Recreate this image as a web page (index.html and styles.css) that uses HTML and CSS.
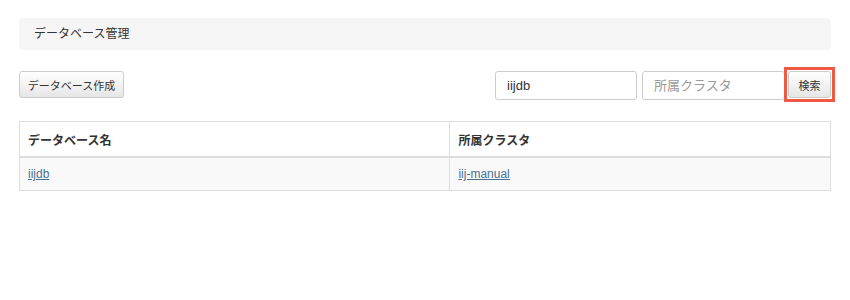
FILE: index.html
```html
<!doctype html>
<html lang="ja">
    <head>
        <meta charset="UTF-8" />
        <meta name="viewport" content="width=device-width, initial-scale=1.0" />
        <title>データベース管理</title>
        <link rel="stylesheet" href="styles.css">
    </head>
    <body>
        <div class="page">
            <div class="breadcrumb">データベース管理</div>

            <div class="toolbar">
                <button type="button" class="btn btn-create">データベース作成</button>
                <form class="search-form">
                    <input type="text" class="form-input" value="iijdb" />
                    <input type="text" class="form-input" placeholder="所属クラスタ" />
                    <span class="highlight">
                        <button type="submit" class="btn btn-search">検索</button>
                    </span>
                </form>
            </div>

            <table class="db-table">
                <thead>
                    <tr>
                        <th>データベース名</th>
                        <th>所属クラスタ</th>
                    </tr>
                </thead>
                <tbody>
                    <tr>
                        <td><a href="#">iijdb</a></td>
                        <td><a href="#">iij-manual</a></td>
                    </tr>
                </tbody>
            </table>
        </div>
    </body>
</html>
```

FILE: styles.css
```css
/* General Styles */
body {
    font-family: "Liberation Sans", "Noto Sans CJK JP", sans-serif;
    font-size: 12px;
    color: #333;
    margin: 0;
    padding: 0;
    background-color: #fff;
}

.page {
    padding: 18px 19px;
}

/* Breadcrumb */
.breadcrumb {
    background-color: #f5f5f5;
    border-radius: 4px;
    height: 32px;
    line-height: 32px;
    padding-left: 15px;
}

/* Toolbar */
.toolbar {
    display: flex;
    justify-content: space-between;
    align-items: flex-start;
    height: 29px;
    margin-top: 21px;
}

.btn {
    font-family: inherit;
    font-size: 11px;
    color: #333;
    height: 27px;
    padding: 0 9px;
    border: 1px solid #ccc;
    border-radius: 3px;
    background: linear-gradient(#fff, #e6e6e6);
    cursor: pointer;
}

.btn-create {
    width: 105px;
    padding: 0;
}

.search-form {
    display: flex;
    align-items: flex-start;
    margin: 0;
}

.form-input {
    box-sizing: border-box;
    width: 142px;
    height: 29px;
    margin-right: 5px;
    padding: 0 11px;
    font-family: inherit;
    font-size: 13px;
    color: #333;
    border: 1px solid #ccc;
    border-radius: 3px;
}

.form-input:nth-child(2) {
    width: 143px;
    margin-right: -1px;
}

.form-input::placeholder {
    color: #999;
}

.highlight {
    display: block;
    margin: -4px -4px 0 0;
    padding: 1px;
    border: 3px solid #ef5a44;
}

.btn-search {
    display: block;
    width: 43px;
    padding: 0;
}

/* Table */
.db-table {
    width: 100%;
    margin-top: 21px;
    border-collapse: collapse;
    border: 1px solid #ddd;
}

.db-table th,
.db-table td {
    text-align: left;
    padding: 0 8px;
    border: 1px solid #ddd;
}

.db-table th {
    height: 34px;
    font-weight: bold;
    border-bottom: 2px solid #ddd;
}

.db-table td {
    height: 32px;
    background-color: #f9f9f9;
}

.db-table a {
    color: #4d6f91;
    text-decoration: underline;
}
```
